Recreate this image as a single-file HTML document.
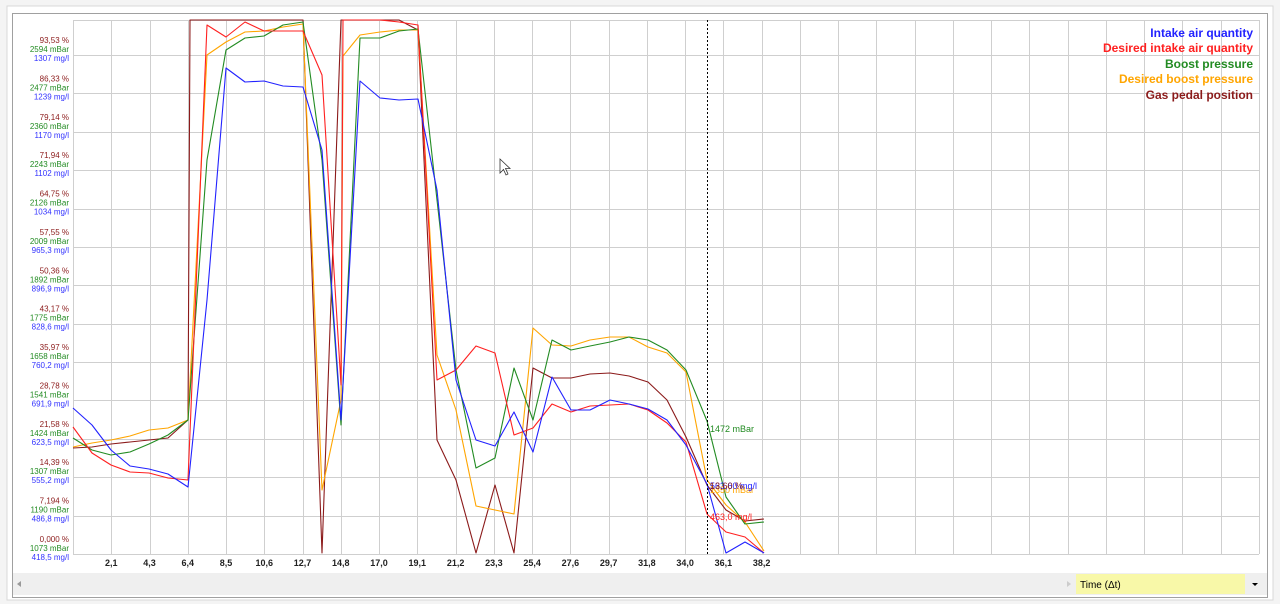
<!DOCTYPE html>
<html><head><meta charset="utf-8"><style>
html,body{margin:0;padding:0;background:#fff;}
body{width:1280px;height:604px;overflow:hidden;font-family:"Liberation Sans",Arial,sans-serif;}
</style></head><body>
<svg width="1280" height="604" xmlns="http://www.w3.org/2000/svg" font-family="Liberation Sans, Arial, sans-serif">
<rect x="0" y="0" width="1280" height="604" fill="#f4f4f4"/>
<rect x="7" y="6" width="1266" height="594" fill="#fff" stroke="#d8d8d8"/>
<rect x="12.5" y="13.5" width="1255" height="584" fill="#fff" stroke="#a0a0a0"/>
<g stroke="#cfcfcf" stroke-width="1">
<line x1="73" y1="20.5" x2="1259" y2="20.5"/>
<line x1="73.5" y1="20" x2="73.5" y2="554"/>
<line x1="1259.5" y1="20" x2="1259.5" y2="554"/>
<line x1="73" y1="554.5" x2="1259" y2="554.5"/>
</g>
<g id="grid" stroke="#cfcfcf" stroke-width="1"></g>
<g id="ylab" font-size="8" text-anchor="end"></g>
<g id="xlab" font-size="9" font-weight="bold" text-anchor="middle" fill="#222"></g>
<g fill="none" stroke-width="1.1" stroke-linejoin="round">
<polyline stroke="#8b1a1a" points="73,448 92,447 111,444 130,442 149,440 168,438 188,420 190,20 303,20 322,553 341,20 399,20 418,30 437,440 456,480 476,553 495,485 514,553 533,368 552,378 571,378 590,374 610,373 629,376 648,382 667,400 686,437 707,485 726,510 745,521 764,519"/>
<polyline stroke="#ffa500" points="73,447 92,443 111,440 130,436 149,430 168,428 188,420 207,55 226,42 245,32 264,31 283,27 303,24 322,490 341,400 343,56 360,35 380,32 399,30 418,30 437,355 456,410 476,506 495,510 514,514 533,328 552,345 571,346 590,340 610,337 629,337 648,347 667,353 686,372 707,480 726,505 745,522 764,551"/>
<polyline stroke="#228b22" points="73,438 92,450 111,455 130,452 149,444 168,435 188,420 207,160 226,50 245,38 264,36 283,25 303,22 322,160 341,425 360,38 380,38 399,31 418,29 437,200 456,370 476,468 495,458 514,368 533,420 552,340 571,350 590,346 610,342 629,337 648,340 667,350 686,370 707,421 726,497 745,524 764,522"/>
<polyline stroke="#ff2020" points="73,427 92,453 111,465 130,472 149,473 168,478 188,480 207,25 226,37 245,22 264,31 283,31 303,31 322,75 341,385 343,20 360,20 380,20 399,22 418,25 437,380 456,370 476,346 495,353 514,435 533,428 552,404 571,412 590,406 610,405 629,404 648,410 667,423 686,442 707,514 726,532 745,537 764,553"/>
<polyline stroke="#2222ff" points="73,408 92,425 111,450 130,466 149,469 168,474 188,487 207,300 226,68 245,82 264,81 283,86 303,87 322,150 341,420 360,81 380,98 399,100 418,99 437,190 456,380 476,440 495,446 514,412 533,452 552,377 571,410 590,410 610,400 629,404 648,409 667,420 686,445 707,484 726,553 745,542 764,553"/>
</g>
<line x1="707.5" y1="20" x2="707.5" y2="554" stroke="#000" stroke-dasharray="2,2"/>
<g font-size="9">
<text x="710" y="432" fill="#228b22">1472 mBar</text>
<text x="710" y="493" fill="#ffa500">1350 mBar</text>
<text x="710" y="489" fill="#2222ff">563,60 mg/l</text>
<text x="710" y="489" fill="#8b1a1a">13,60 %</text>
<text x="710" y="520" fill="#ff2020">463,0 mg/l</text>
</g>
<g font-size="12" font-weight="bold" text-anchor="end">
<text x="1253" y="37" fill="#2222ff">Intake air quantity</text>
<text x="1253" y="52" fill="#ff2020">Desired intake air quantity</text>
<text x="1253" y="68" fill="#228b22">Boost pressure</text>
<text x="1253" y="83" fill="#ffa500">Desired boost pressure</text>
<text x="1253" y="99" fill="#8b1a1a">Gas pedal position</text>
</g>
<path d="M500,159 L500,173 L503.5,169.5 L506,175 L508,174 L505.5,168.5 L510,168.5 Z" fill="#fff" stroke="#333" stroke-width="0.8"/>
<rect x="13" y="573" width="1254" height="22" fill="#efefef"/>
<path d="M21,581 L17,584 L21,587 Z" fill="#999"/>
<path d="M1067,581 L1071,584 L1067,587 Z" fill="#ccc"/>
<rect x="1076" y="574" width="169" height="20" fill="#f8f8a8"/>
<text x="1080" y="588" font-size="10" fill="#000">Time (Δt)</text>
<path d="M1252,583 L1258,583 L1255,586 Z" fill="#000"/>
</svg>
<script>
(function(){
var ns="http://www.w3.org/2000/svg";
var g=document.getElementById('grid'),yl=document.getElementById('ylab'),xl=document.getElementById('xlab');
var step=(1259-73)/31;
for(var k=1;k<31;k++){var x=Math.round(73+step*k)+0.5;var l=document.createElementNS(ns,'line');l.setAttribute('x1',x);l.setAttribute('x2',x);l.setAttribute('y1',20);l.setAttribute('y2',554);g.appendChild(l);}
var ys=(554-55)/13;
for(var k=1;k<14;k++){var y=Math.round(554-ys*k)+0.5;var l=document.createElementNS(ns,'line');l.setAttribute('x1',73);l.setAttribute('x2',1259);l.setAttribute('y1',y);l.setAttribute('y2',y);g.appendChild(l);}
var p=["0,000 %","7,194 %","14,39 %","21,58 %","28,78 %","35,97 %","43,17 %","50,36 %","57,55 %","64,75 %","71,94 %","79,14 %","86,33 %","93,53 %"];
var m=["1073","1190","1307","1424","1541","1658","1775","1892","2009","2126","2243","2360","2477","2594"];
var q=["418,5","486,8","555,2","623,5","691,9","760,2","828,6","896,9","965,3","1034","1102","1170","1239","1307"];
function t(par,x,y,s,c){var e=document.createElementNS(ns,'text');e.setAttribute('x',x);e.setAttribute('y',y);if(c)e.setAttribute('fill',c);e.textContent=s;par.appendChild(e);}
for(var k=0;k<14;k++){var y=554-ys*k;t(yl,69,y-12,p[k],"#8b1a1a");t(yl,69,y-3,m[k]+" mBar","#228b22");t(yl,69,y+6,q[k]+" mg/l","#3333ff");}
var xs=["2,1","4,3","6,4","8,5","10,6","12,7","14,8","17,0","19,1","21,2","23,3","25,4","27,6","29,7","31,8","34,0","36,1","38,2"];
for(var k=0;k<18;k++){t(xl,73+step*(k+1),566,xs[k]);}
})();
</script>
</body></html>
